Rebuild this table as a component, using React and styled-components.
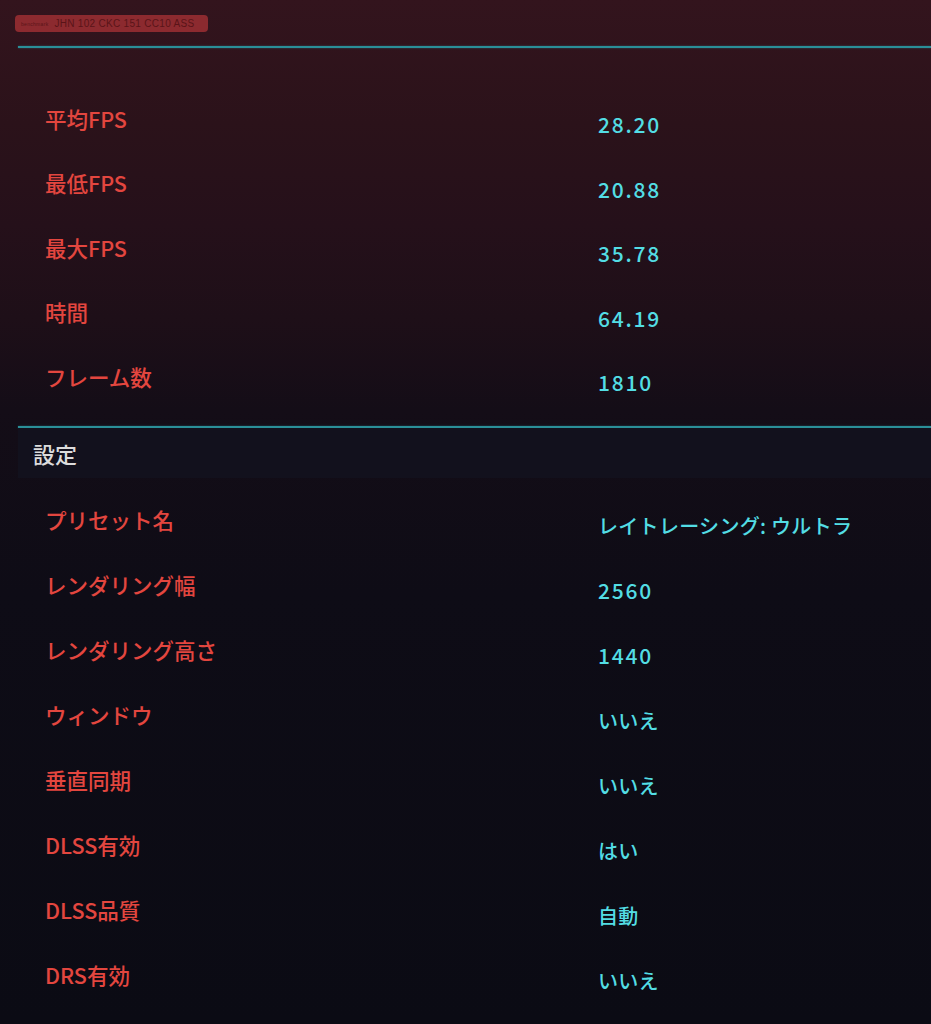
import React from "react";
import styled, { createGlobalStyle } from "styled-components";

const Global = createGlobalStyle`
    html, body {
        margin: 0;
        padding: 0;
        background: #0b0b14;
    }
    body {
        font-family: "Noto Sans CJK JP", "Noto Sans", sans-serif;
    }
`

const Page = styled.div`
    width: 931px;
    min-height: 1024px;
    padding-top: 15px;
    box-sizing: border-box;
    overflow: hidden;
    background: linear-gradient(180deg, #33141d 0%, #2b121a 12%, #25101a 22%, #1e0f18 31%, #140d17 40%, #0e0c16 58%, #0b0b14 100%);
`
const Tag = styled.div`
    display: flex;
    align-items: center;
    gap: 6px;
    margin-left: 15px;
    width: 193px;
    height: 17px;
    padding-left: 6px;
    box-sizing: border-box;
    border-radius: 4px;
    background: #8c2a2f;
    color: #5a1418;
    font-family: "Liberation Sans", sans-serif;
    font-size: 10px;
    letter-spacing: 0.3px;
    white-space: nowrap;
    & > small {
        font-size: 5px;
    }
`
const Divider = styled.div`
    margin-left: 18px;
    height: 2px;
    background: #2a8f98;
    box-shadow: 0 0 2px rgba(60, 190, 200, 0.4);
`
const List = styled.div`
    display: flex;
    flex-direction: column;
    padding-top: ${p => p.$top}px;
    padding-bottom: ${p => p.$bottom}px;
`
const Row = styled.div`
    display: grid;
    grid-template-columns: 553px 1fr;
    align-items: center;
    height: ${p => p.$h}px;
    padding-left: 45px;
`
const Label = styled.div`
    color: #e3463f;
    font-size: 21.5px;
    font-weight: 500;
`
const Value = styled.div`
    margin-top: 12px;
    color: #53dde4;
    font-size: ${p => (p.$num ? 21 : 20)}px;
    font-weight: 500;
    letter-spacing: ${p => (p.$num ? 1.8 : 0.3)}px;
`
const SectionHead = styled.div`
    display: flex;
    align-items: center;
    margin-left: 18px;
    height: 50px;
    padding-left: 15px;
    background: #12111d;
    color: #dcdcdc;
    font-size: 22px;
    font-weight: 500;
`

const stats = [
    ["平均FPS", "28.20"],
    ["最低FPS", "20.88"],
    ["最大FPS", "35.78"],
    ["時間", "64.19"],
    ["フレーム数", "1810"],
]

const settings = [
    ["プリセット名", "レイトレーシング: ウルトラ"],
    ["レンダリング幅", "2560"],
    ["レンダリング高さ", "1440"],
    ["ウィンドウ", "いいえ"],
    ["垂直同期", "いいえ"],
    ["DLSS有効", "はい"],
    ["DLSS品質", "自動"],
    ["DRS有効", "いいえ"],
]

const isNum = (v) => /^[\d.]+$/.test(v);

function App() {
    return (
        <Page>
            <Global />
            <Tag>
                <small>benchmark</small>
                <span>JHN 102 CKC 151 CC10 ASS</span>
            </Tag>
            <Divider style={{ marginTop: 14 }} />
            <List $top={38} $bottom={17}>
                {stats.map(([k, v]) => (
                    <Row key={k} $h={64.5}>
                        <Label>{k}</Label>
                        <Value $num={isNum(v)}>{v}</Value>
                    </Row>
                ))}
            </List>
            <Divider />
            <SectionHead>設定</SectionHead>
            <List $top={9} $bottom={0}>
                {settings.map(([k, v]) => (
                    <Row key={k} $h={65}>
                        <Label>{k}</Label>
                        <Value $num={isNum(v)}>{v}</Value>
                    </Row>
                ))}
            </List>
        </Page>
    )
}

export default App;
